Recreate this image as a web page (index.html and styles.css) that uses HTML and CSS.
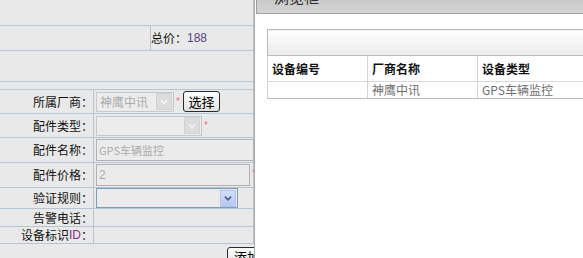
FILE: index.html
```html
<!DOCTYPE html>
<html lang="zh-CN">
<head>
    <meta charset="UTF-8">
    <link rel="stylesheet" href="styles.css">
    <title>配件添加</title>
</head>
<body>

<div class="screen">
    <div class="page">
        <div class="band band-top"></div>
        <div class="band band-total">
            <div class="total-spacer"></div>
            <div class="total">总价：<span class="num">188</span></div>
        </div>
        <div class="band band-gap"></div>
        <div class="band band-thin"></div>

        <div class="field f1">
            <div class="label">所属厂商：</div>
            <div class="value">
                <span class="select select-off sel-maker">
                    <span class="select-text">神鹰中讯</span>
                    <span class="arrow arrow-off"><svg width="16" height="16" viewBox="0 0 16 16"><polyline points="4.5,6 8,9.5 11.5,6" fill="none" stroke="#f4f4f4" stroke-width="2"/></svg></span>
                </span>
                <span class="star">*</span>
                <button class="btn btn-pick">选择</button>
            </div>
        </div>
        <div class="field f2">
            <div class="label">配件类型：</div>
            <div class="value">
                <span class="select select-off sel-type">
                    <span class="select-text"></span>
                    <span class="arrow arrow-off"><svg width="16" height="16" viewBox="0 0 16 16"><polyline points="4.5,6 8,9.5 11.5,6" fill="none" stroke="#f4f4f4" stroke-width="2"/></svg></span>
                </span>
                <span class="star">*</span>
            </div>
        </div>
        <div class="field f3">
            <div class="label">配件名称：</div>
            <div class="value">
                <span class="input input-name">GPS车辆监控</span>
            </div>
        </div>
        <div class="field f4">
            <div class="label">配件价格：</div>
            <div class="value">
                <span class="input input-price">2</span>
                <span class="star star-top">*</span>
            </div>
        </div>
        <div class="field f5">
            <div class="label">验证规则：</div>
            <div class="value">
                <span class="select sel-rule">
                    <span class="select-text"></span>
                    <span class="arrow arrow-on"><svg width="16" height="16" viewBox="0 0 16 16"><polyline points="4.5,6.5 8,10 11.5,6.5" fill="none" stroke="#4d6185" stroke-width="2"/></svg></span>
                </span>
            </div>
        </div>
        <div class="field f6">
            <div class="label">告警电话：</div>
            <div class="value"></div>
        </div>
        <div class="field f7">
            <div class="label">设备标识<span class="id">ID</span>：</div>
            <div class="value"></div>
        </div>

        <div class="actions">
            <button class="btn btn-add">添加</button>
        </div>
    </div>

    <div class="dialog">
        <div class="dialog-title"><span>浏览框</span></div>
        <div class="dialog-body">
            <table class="grid">
                <colgroup>
                    <col class="c1">
                    <col class="c2">
                    <col class="c3">
                </colgroup>
                <thead>
                    <tr><th colspan="3" class="grid-bar"></th></tr>
                    <tr class="grid-head">
                        <th>设备编号</th>
                        <th>厂商名称</th>
                        <th>设备类型</th>
                    </tr>
                </thead>
                <tbody>
                    <tr class="grid-row">
                        <td></td>
                        <td>神鹰中讯</td>
                        <td>GPS车辆监控</td>
                    </tr>
                </tbody>
            </table>
        </div>
    </div>
</div>

</body>
</html>
```

FILE: styles.css
```css
body {
    margin: 0;
    font-family: "Noto Sans CJK SC", "Liberation Sans", sans-serif;
    font-size: 12px;
    color: #111;
}

.screen {
    display: flex;
    width: 583px;
    height: 258px;
    overflow: hidden;
}

/* left: the form page behind the dialog */
.page {
    width: 254px;
    flex: none;
    background: #e9e9e9;
    overflow: hidden;
}

.band {
    box-sizing: border-box;
    width: 254px;
    border-right: 1px solid #b9c4d2;
    border-bottom: 1px solid #b9c4d2;
}

.band-top { height: 26px; }
.band-gap { height: 31px; }
.band-thin { height: 8px; }

.band-total {
    height: 25px;
    display: flex;
}

.total-spacer {
    width: 151px;
    box-sizing: border-box;
    border-right: 1px solid #b9c4d2;
}

.total {
    display: flex;
    align-items: center;
    white-space: nowrap;
    line-height: 24px;
}

.num {
    color: #5a3f7a;
    font-family: "Liberation Sans", sans-serif;
}

.field {
    box-sizing: border-box;
    width: 254px;
    display: grid;
    grid-template-columns: 94px 1fr;
    border-right: 1px solid #b9c4d2;
    border-bottom: 1px solid #b9c4d2;
}

.f1 { height: 24px; }
.f2 { height: 24px; }
.f3 { height: 25px; }
.f4 { height: 25px; }
.f5 { height: 21px; }
.f6 { height: 18px; }
.f7 { height: 17px; }

.label {
    box-sizing: border-box;
    border-right: 1px solid #b9c4d2;
    text-align: right;
    white-space: nowrap;
    display: flex;
    align-items: center;
    justify-content: flex-end;
    line-height: 14px;
}

.id {
    color: #8b2a8b;
    font-family: "Liberation Sans", sans-serif;
}

.value {
    display: flex;
    align-items: center;
    padding-left: 2px;
    white-space: nowrap;
}

.select {
    box-sizing: border-box;
    height: 20px;
    display: inline-flex;
    align-items: center;
    justify-content: space-between;
    border: 1px solid #c8c8c8;
    background: #ececec;
    padding: 0 1px 0 3px;
}

.select-text {
    color: #ababab;
    font-size: 12px;
}

.sel-maker { width: 78px; }
.sel-type { width: 106px; }

.sel-rule {
    width: 142px;
    border-color: #7f9db9;
    background: #ebebeb;
}

.arrow {
    box-sizing: border-box;
    width: 16px;
    height: 17px;
    display: flex;
    align-items: center;
    justify-content: center;
}

.arrow-off {
    background: #dcdcdc;
    border: 1px solid #d2d2d2;
}

.arrow-on {
    background: linear-gradient(#d2defb, #b6c9f2);
    border: 1px solid #b3c4ea;
}

.star {
    color: #ee7c84;
    font-size: 10px;
    font-family: "Liberation Sans", sans-serif;
    margin: 0 2px 0 2px;
}

.star-top {
    align-self: flex-start;
    margin-top: 5px;
}

.input {
    box-sizing: border-box;
    height: 22px;
    display: inline-flex;
    align-items: center;
    border: 1px solid #b2b2b2;
    background: #ebebeb;
    color: #ababab;
    font-size: 11px;
    padding-left: 2px;
}

.input-name {
    width: 158px;
    flex: none;
}

.input-price {
    width: 154px;
    flex: none;
    font-family: "Liberation Sans", sans-serif;
    font-size: 12px;
}

.btn {
    box-sizing: border-box;
    font-family: "Noto Sans CJK SC", sans-serif;
    font-size: 13px;
    color: #000;
    border: 1px solid #2b2b2b;
    border-radius: 3px;
    background: linear-gradient(#fdfdfd, #e2e2e2);
    padding: 0;
    line-height: 17px;
}

.btn-pick {
    width: 37px;
    height: 21px;
    margin-left: 1px;
}

.actions {
    padding: 3px 0 0 227px;
}

.btn-add {
    width: 40px;
    height: 18px;
    display: block;
}

/* right: the browse dialog */
.dialog {
    flex: 1;
    background: #fff;
    border-left: 1px solid #a9a9a9;
    overflow: hidden;
}

.dialog-title {
    height: 13px;
    margin-left: 1px;
    border-left: 1px solid #9c9c9c;
    border-bottom: 1px solid #a2a2a2;
    background: linear-gradient(#c8c8c8, #d5d5d5);
    overflow: hidden;
}

.dialog-title span {
    display: block;
    margin: -13px 0 0 17px;
    font-size: 15px;
    line-height: 20px;
    color: #2a2a2a;
}

.dialog-body {
    padding: 15px 0 0 12px;
}

.grid {
    border-collapse: collapse;
    width: 360px;
    border: 1px solid #b8b8b8;
    table-layout: fixed;
}

.c1 { width: 100px; }
.c2 { width: 110px; }
.c3 { width: 150px; }

.grid-bar {
    height: 25px;
    padding: 0;
    background: linear-gradient(#fefefe, #ebebeb);
    border-bottom: 1px solid #bcbcbc;
}

.grid th,
.grid td {
    padding: 0 0 0 4px;
    text-align: left;
    white-space: nowrap;
    overflow: hidden;
}

.grid-head th {
    height: 25px;
    font-weight: bold;
    font-size: 12px;
    color: #111;
    border-left: 1px solid #d4d4d4;
    border-bottom: 1px solid #d8d8d8;
}

.grid-row td {
    height: 16px;
    line-height: 14px;
    color: #6e6e6e;
    font-size: 12px;
    border-left: 1px solid #d4d4d4;
    border-bottom: 1px solid #bcbcbc;
}
```
